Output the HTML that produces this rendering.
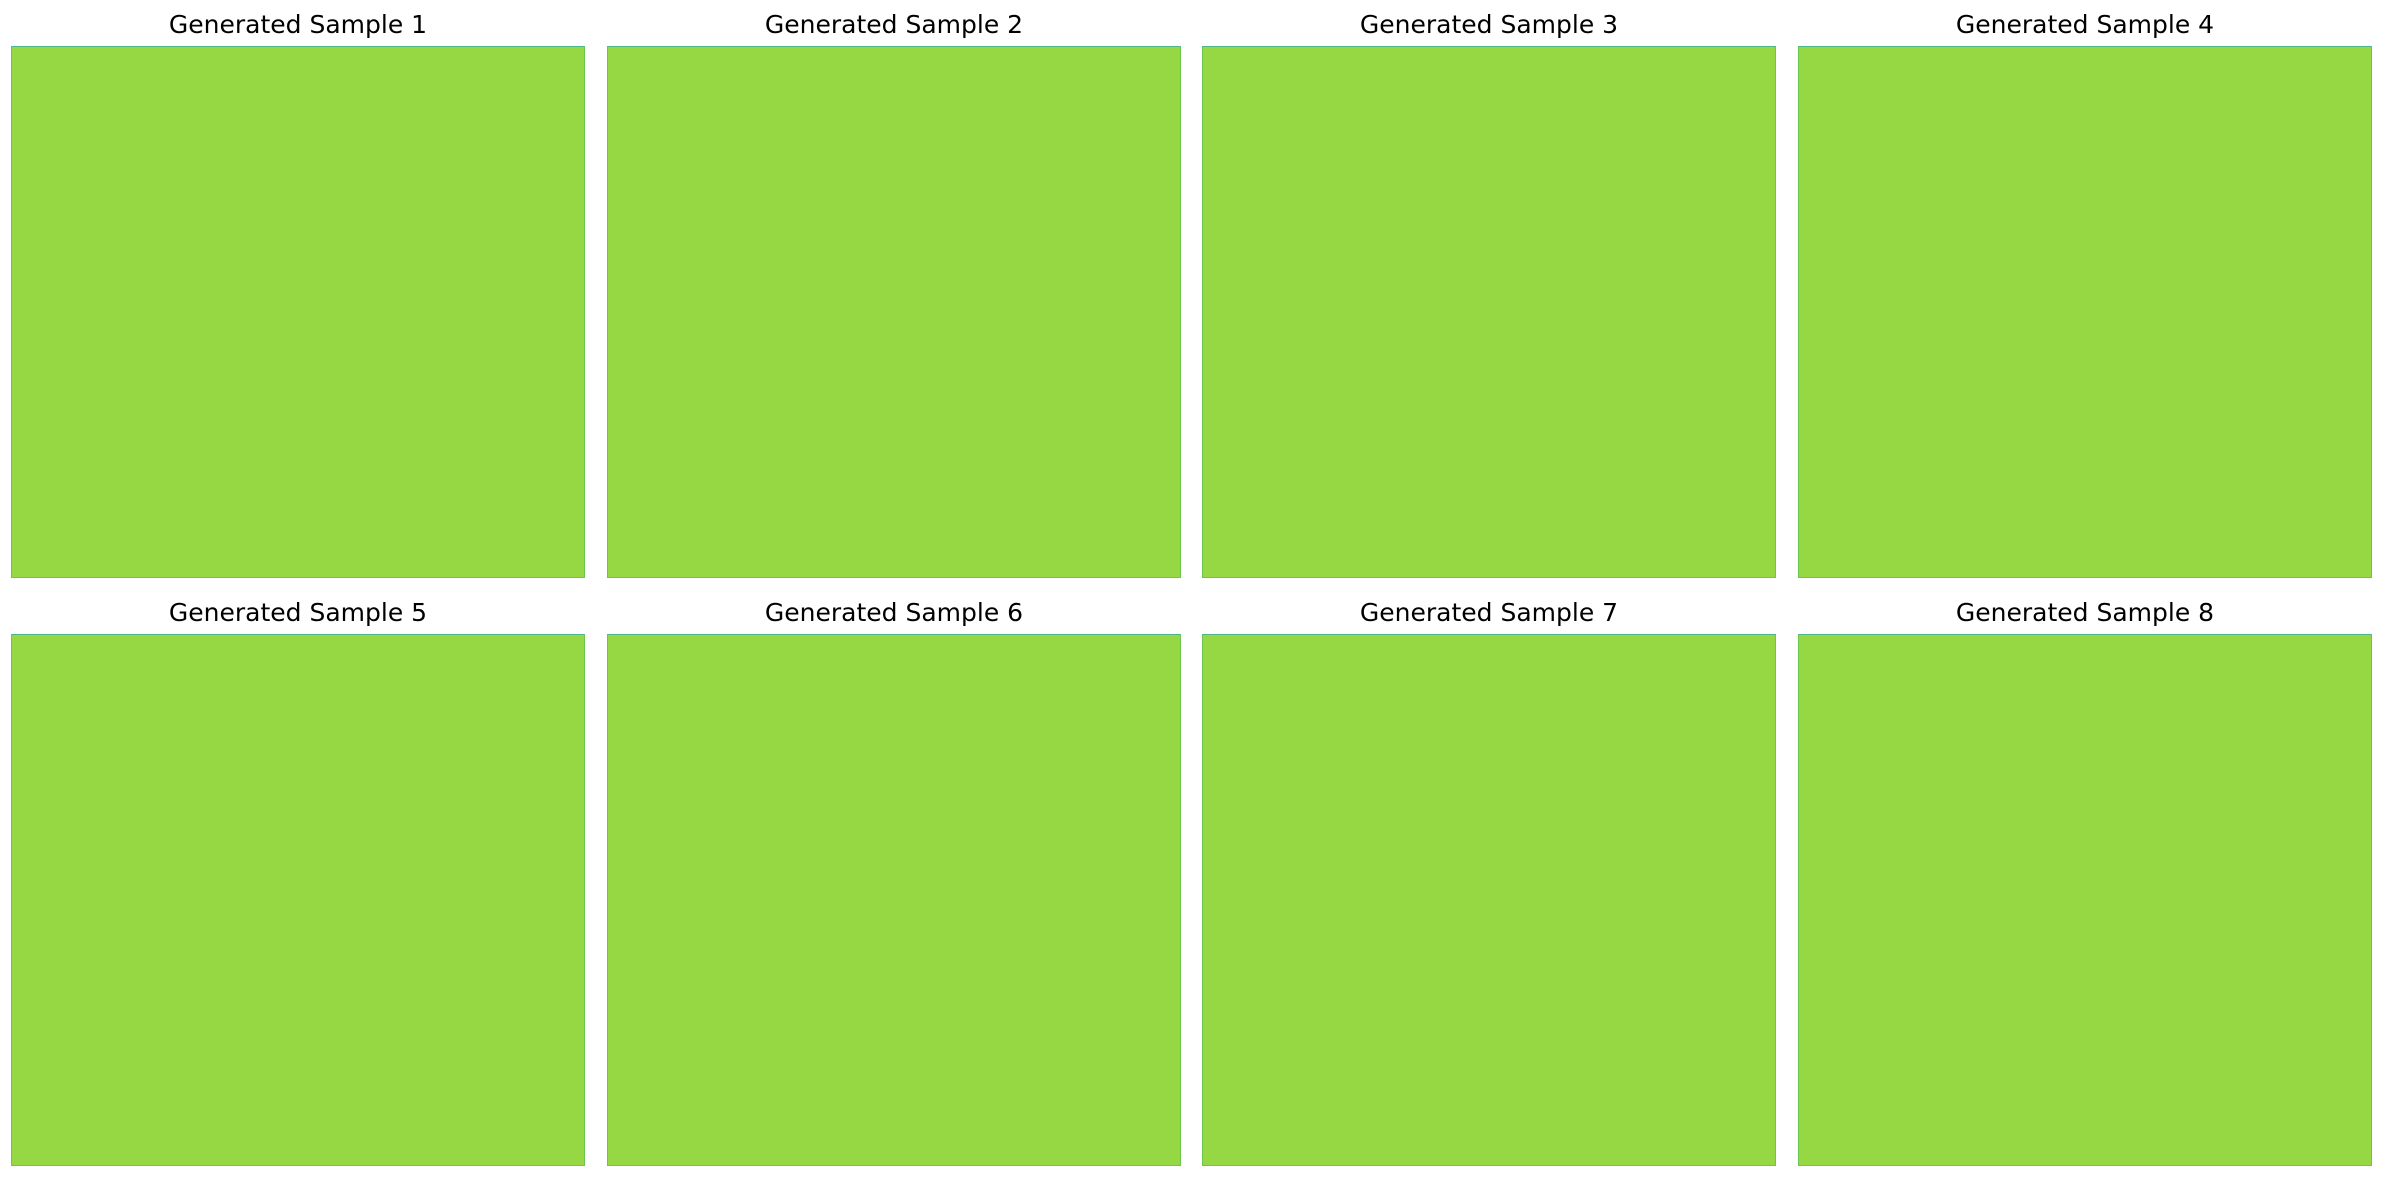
<!DOCTYPE html>
<html><head><style>
body{margin:0;width:2385px;height:1182px;background:#fff;position:relative;overflow:hidden;font-family:"DejaVu Sans","Liberation Sans",sans-serif;}
.p{position:absolute;width:572px;height:530px;background:#96d843;border:1px solid #6cc64c;border-top-color:#4fb58a;}
.t{position:absolute;width:574px;text-align:center;font-size:25px;color:#000;line-height:28px;}
</style></head><body>
<div class="t" style="left:11px;top:11px">Generated Sample 1</div>
<div class="t" style="left:607px;top:11px">Generated Sample 2</div>
<div class="t" style="left:1202px;top:11px">Generated Sample 3</div>
<div class="t" style="left:1798px;top:11px">Generated Sample 4</div>
<div class="t" style="left:11px;top:599px">Generated Sample 5</div>
<div class="t" style="left:607px;top:599px">Generated Sample 6</div>
<div class="t" style="left:1202px;top:599px">Generated Sample 7</div>
<div class="t" style="left:1798px;top:599px">Generated Sample 8</div>
<div class="p" style="left:11px;top:46px"></div>
<div class="p" style="left:607px;top:46px"></div>
<div class="p" style="left:1202px;top:46px"></div>
<div class="p" style="left:1798px;top:46px"></div>
<div class="p" style="left:11px;top:634px"></div>
<div class="p" style="left:607px;top:634px"></div>
<div class="p" style="left:1202px;top:634px"></div>
<div class="p" style="left:1798px;top:634px"></div>
</body></html>
